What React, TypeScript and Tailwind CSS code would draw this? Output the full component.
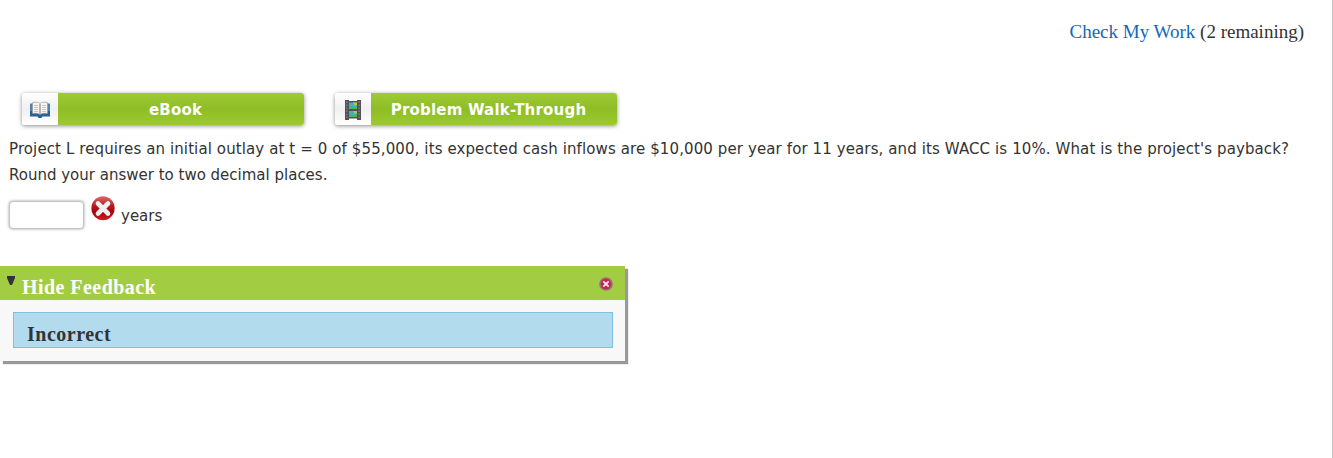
import { useState } from "react";

const BookIcon = () => (
  <svg width="22" height="18" viewBox="0 0 22 18" className="mt-0.5">
    <path d="M1 4H21V15.5H13.5L12.5 17H9.5L8.5 15.5H1Z" fill="#286397" />
    <path d="M1 2.5H21V10H1Z" fill="#4d83b0" />
    <path d="M3.5 1.5Q8 .5 11 2.2Q14 .5 18.5 1.5V12.5Q14 11.5 11 13.5Q8 11.5 3.5 12.5Z" fill="#f8f5f1" stroke="#8d9196" strokeWidth=".6" />
    <path d="M11 3V13.5" stroke="#777" strokeWidth="1" />
    <path d="M5 4.5H9M5 6.5H9M5 8.5H9M5 10.5H9M13 4.5H17M13 6.5H17M13 8.5H17M13 10.5H17" stroke="#c6beb7" strokeWidth=".9" />
  </svg>
);

const FilmIcon = () => (
  <svg width="16" height="20" viewBox="0 0 16 20" className="mt-0.5">
    <path d="M0 0H4V1H12V0H16V20H12V18.5H4V20H0Z" fill="#53505a" />
    <path d="M4 2.5H12V9H4ZM4 11H12V17H4Z" fill="#3caeda" />
    <path d="M4 5L8 7.5L12 6V9H4ZM4 13L8 15L12 14V17H4Z" fill="#48bd45" />
    <path d="M8 2.5H12V5L10 6ZM8 11H12V13L10 14Z" fill="#a7ce47" />
    <path d="M1.8 1.5V19M14.2 1.5V19" stroke="#85818a" strokeWidth="1.3" strokeDasharray="1.5 1.5" />
  </svg>
);

const WrongIcon = () => (
  <svg width="24" height="25" viewBox="0 0 24 25">
    <defs>
      <linearGradient id="wrong" x1="0" y1="0" x2="0" y2="1">
        <stop offset="0" stopColor="#d76b69" />
        <stop offset=".4" stopColor="#b91b20" />
        <stop offset=".65" stopColor="#a30409" />
        <stop offset="1" stopColor="#cf2226" />
      </linearGradient>
    </defs>
    <ellipse cx="12" cy="12.3" rx="11.6" ry="12" fill="url(#wrong)" />
    <path d="M7 7.5L17 17.5M17 7.5L7 17.5" stroke="#f0efed" strokeWidth="4.6" strokeLinecap="round" />
  </svg>
);

const CloseIcon = () => (
  <svg width="14" height="14" viewBox="0 0 14 14">
    <circle cx="7" cy="7" r="6" fill="#c22450" stroke="#957078" strokeWidth="1.7" />
    <path d="M4.3 4.3L9.7 9.7M9.7 4.3L4.3 9.7" stroke="#ffe7ed" strokeWidth="1.8" />
  </svg>
);

const App = () => {
  const [answer, setAnswer] = useState("");
  const [open, setOpen] = useState(true);

  const resources = [
    { label: "eBook", icon: <BookIcon /> },
    { label: "Problem Walk-Through", icon: <FilmIcon /> },
  ];

  return (
    <main className="h-[458px] w-full overflow-hidden border-r border-[#c8c8c8] bg-white font-['DejaVu_Sans',sans-serif] text-[15px] text-[#333]">
      {/* Attempts */}
      <div className="flex h-[93px] justify-end pt-5 pr-7 font-['Liberation_Serif',serif] text-[19px] leading-6">
        <p className="whitespace-nowrap">
          <a href="#" className="text-[#1168bb]">Check My Work</a> (2 remaining)
        </p>
      </div>

      {/* Resources */}
      <div className="flex gap-[31px] pl-[22px]">
        {resources.map((r) => (
          <button key={r.label} type="button" className="flex h-8 w-[282px] overflow-hidden rounded-[3px] shadow-[0_1px_4px_rgba(0,0,0,0.45)]">
            <span className="grid h-full w-9 shrink-0 place-items-center bg-linear-to-b from-white via-[#f0f0f0] to-white">
              {r.icon}
            </span>
            <span className="grid h-full flex-1 place-items-center bg-linear-to-b from-[#9dca36] via-[#8fbd25] to-[#9bca30] pt-0.5 pr-[11px] text-[15px] font-bold tracking-[0.2px] text-white">
              {r.label}
            </span>
          </button>
        ))}
      </div>

      {/* Question */}
      <p className="mt-[11px] pl-[9px] leading-[26px] whitespace-nowrap">
        <span className="tracking-[0.108px]">Project L requires an initial outlay at t = 0 of $55,000, its expected cash inflows are $10,000 per year for 11 years, and its WACC is 10%. What is the project's payback?</span>
        <br />
        Round your answer to two decimal places.
      </p>
      <div className="mt-2 flex h-[34px] items-start pl-[9px]">
        <input value={answer} onChange={(e) => setAnswer(e.target.value)} aria-label="years" className="mt-[5px] h-7 w-[75px] rounded-[4px] border border-[#c5c5c5] bg-white px-2 shadow-[0_0_3px_rgba(0,0,0,0.4)] outline-none" />
        <span className="ml-[7px]"><WrongIcon /></span>
        <span className="ml-[6px] pt-2 leading-6">years</span>
      </div>

      {/* Feedback */}
      <section className="mt-9 w-[625px] bg-[#f8f8f8] font-['Liberation_Serif',serif] text-[20px] font-bold shadow-[3px_3px_1px_#999]">
        <header className="flex h-[34px] bg-[#a2cd42] pr-3 pl-[7px] text-white">
          <button type="button" onClick={() => setOpen(!open)} className="flex">
            <svg width="8" height="10" viewBox="0 0 8 10" className="mt-[10px] mr-[7px]">
              <path d="M0 0H8V2L5 9H3L0 2Z" fill="#333" />
            </svg>
            <span className="pt-[9px] leading-6 tracking-[0.45px]">Hide Feedback</span>
          </button>
          <button type="button" aria-label="Close" className="mt-[11px] ml-auto h-[14px]"><CloseIcon /></button>
        </header>
        {open && (
          <div className="px-[13px] pt-3 pr-3 pb-[13px]">
            <div className="h-9 border border-[#7ec0dd] bg-[#b2dcee] pt-[9px] pl-[13px] leading-6 tracking-[0.5px]">Incorrect</div>
          </div>
        )}
      </section>
    </main>
  );
};

export default App;
